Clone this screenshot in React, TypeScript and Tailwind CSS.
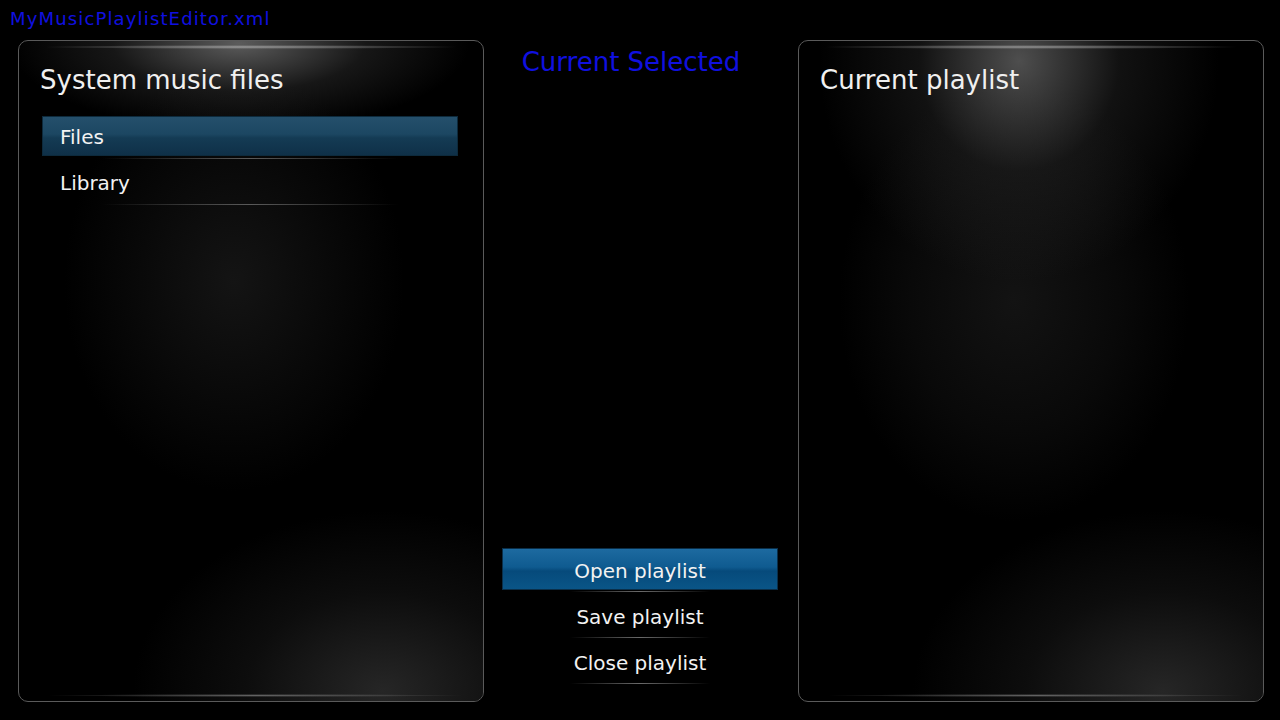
const font = "font-['DejaVu_Sans',sans-serif]";

function Panel({ title, bright, children }: { title: string; bright?: boolean; children?: React.ReactNode }) {
  return (
    <div className="relative h-[662px] w-[466px] overflow-hidden rounded-[10px] border border-[#5a5a5a] bg-black">
      {/* beam */}
      <div
        className={
          bright
            ? "pointer-events-none absolute left-[40px] top-[40px] h-[440px] w-[350px] bg-[radial-gradient(closest-side,rgba(19,19,19,1),rgba(11,11,11,0.8)_60%,rgba(0,0,0,0))]"
            : "pointer-events-none absolute left-[45px] top-[30px] h-[420px] w-[340px] bg-[radial-gradient(closest-side,rgba(20,20,20,1),rgba(10,10,10,0.8)_60%,rgba(0,0,0,0))]"
        }
      ></div>
      {/* top spotlight */}
      {bright ? (
        <div className="pointer-events-none absolute left-[20px] top-[-200px] h-[440px] w-[400px] bg-[radial-gradient(closest-side,rgba(130,130,130,0.6),rgba(50,50,50,0.35)_50%,rgba(0,0,0,0))]"></div>
      ) : (
        <div className="pointer-events-none absolute left-[-10px] top-[-85px] h-[175px] w-[460px] bg-[radial-gradient(closest-side,rgba(140,140,140,0.65),rgba(50,50,50,0.45)_55%,rgba(0,0,0,0))]"></div>
      )}
      {/* top rim */}
      <div className="pointer-events-none absolute left-[20px] right-[20px] top-[4px] h-[4px] bg-[radial-gradient(closest-side,rgba(200,200,200,0.6),rgba(0,0,0,0))]"></div>
      {/* bottom right glow */}
      <div className="pointer-events-none absolute bottom-[-170px] right-[-150px] h-[360px] w-[500px] bg-[radial-gradient(closest-side,rgba(38,38,38,1),rgba(18,18,18,0.7)_55%,rgba(0,0,0,0))]"></div>
      {/* bottom rim */}
      <div className="pointer-events-none absolute bottom-[4px] left-[30px] right-[20px] h-[3px] bg-[radial-gradient(closest-side,rgba(120,120,120,0.8),rgba(0,0,0,0))]"></div>
      <div className="relative flex flex-col px-[21px] pt-[22px]">
        <div className="text-[26px] leading-[34px] text-[#f0f0f0]">{title}</div>
        {children}
      </div>
    </div>
  );
}

function ListItem({ label, active }: { label: string; active?: boolean }) {
  return (
    <div className="relative flex flex-col">
      <div
        className={
          active
            ? "flex h-[40px] items-center border border-[#0d2a3c] bg-[linear-gradient(to_bottom,#244f6b,#1c4762_45%,#143b54_55%,#0f3048)] pt-[2px] pl-[17px] text-[20px] text-[#f2f2f2]"
            : "flex h-[40px] items-center pt-[2px] pl-[18px] text-[20px] text-[#f2f2f2]"
        }
      >
        {label}
      </div>
      <div className="mx-[60px] mt-[2px] h-px bg-[linear-gradient(to_right,rgba(0,0,0,0),#5a5a5a,rgba(0,0,0,0))]"></div>
      <div className="h-[3px]"></div>
    </div>
  );
}

function Button({ label, active }: { label: string; active?: boolean }) {
  return (
    <div className="flex flex-col items-center">
      <div
        className={
          active
            ? "flex h-[42px] w-[276px] items-center justify-center border border-[#0a2f4a] bg-[linear-gradient(to_bottom,#1d6aa0,#0f5b90_45%,#064a7b_55%,#0a5587)] pt-[3px] text-[20px] text-[#f2f2f2]"
            : "flex h-[40px] w-[276px] items-center justify-center pt-[2px] text-[20px] text-[#f2f2f2]"
        }
      >
        {label}
      </div>
      <div className="mt-[1px] h-px w-[140px] bg-[linear-gradient(to_right,rgba(0,0,0,0),#6a6a6a,rgba(0,0,0,0))]"></div>
      <div className="h-[4px]"></div>
    </div>
  );
}

export default function App() {
  return (
    <div className={`${font} flex h-[720px] w-[1280px] flex-col bg-black`}>
      <div className="h-[40px] pl-[10px] pt-[6px] text-[18px] leading-[26px] tracking-[1.15px] text-[#1010e0]">MyMusicPlaylistEditor.xml</div>
      <div className="flex pl-[18px]">
        <Panel title="System music files">
          <div className="mt-[19px] flex flex-col pl-[2px] pr-[4px]">
            <ListItem label="Files" active />
            <ListItem label="Library" />
          </div>
        </Panel>
        <div className="flex w-[314px] flex-col items-center">
          <div className="mr-[20px] pt-[6px] text-[26px] leading-[32px] text-[#1010e0]">Current Selected</div>
          <div className="flex-1"></div>
          <div className="mb-[14px] mr-[2px] flex flex-col">
            <Button label="Open playlist" active />
            <Button label="Save playlist" />
            <Button label="Close playlist" />
          </div>
        </div>
        <Panel title="Current playlist" bright />
      </div>
    </div>
  );
}
